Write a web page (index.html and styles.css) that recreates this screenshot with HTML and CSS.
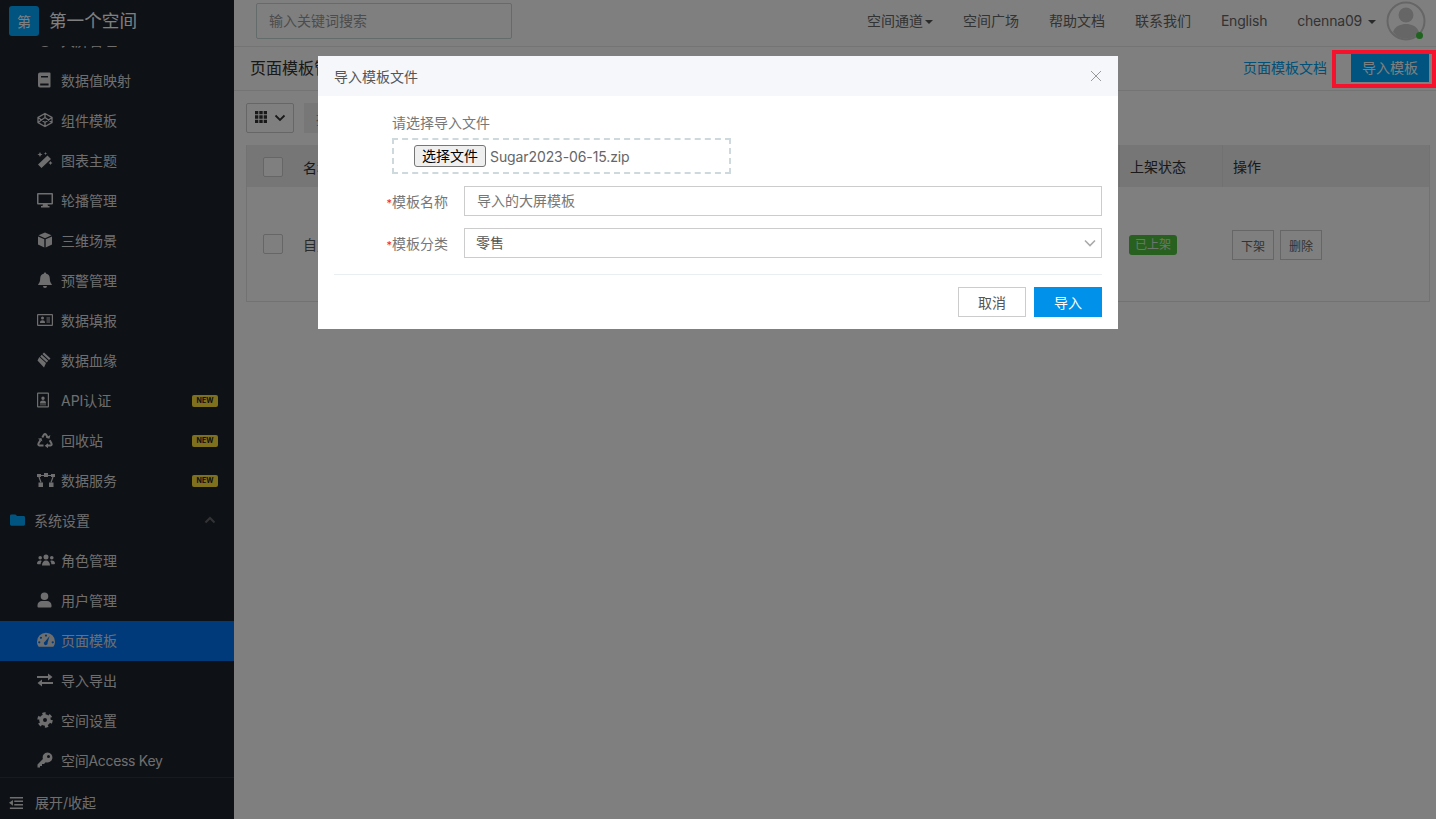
FILE: index.html
```html
<!DOCTYPE html>
<html lang="zh-CN">
<head>
<meta charset="utf-8">
<title>页面模板</title>
<link rel="stylesheet" href="styles.css">
</head>
<body>
<div class="app">
  <aside class="sidebar">
    <div class="brand"><span class="logo">第</span><span class="brand-name">第一个空间</span></div>
    <nav class="menu">
      <div class="clip-row"><a class="item"><svg class="ico" viewBox="0 0 16 16"><circle cx="8" cy="8" r="7"/></svg><span>大屏管理</span></a></div>
      <a class="item"><svg class="ico" viewBox="0 0 16 16"><path fill-rule="evenodd" d="M3 .5h9.500a1 1 0 011 1v13a1 1 0 01-1 1H3a2 2 0 01-2-2v-11a2 2 0 012-2zM4 4v1.400h7V4zM3.200 11.600v1.800h8.400v-1.800z"/></svg><span>数据值映射</span></a>
      <a class="item"><svg class="ico ico-line" viewBox="0 0 16 16"><path d="M8 1.500L15 5.500v5l-7 4-7-4v-5zM8 1.500v4M8 10.500v4M1 5.500l7 5 7-5M1 10.500l7-5 7 5"/></svg><span>组件模板</span></a>
      <a class="item"><svg class="ico" viewBox="0 0 16 16"><path d="M10.500 3.500l3.500 3.500L4.500 16 1 12.500zM3 0l.8 1.700 1.700.8-1.700.8L3 5l-.8-1.700L.5 2.500l1.700-.8zM8.500 0l.5 1 1 .5-1 .5-.5 1-.5-1-1-.5 1-.5zM13.500 9l.7 1.300 1.300.7-1.300.7-.7 1.300-.7-1.300-1.300-.7 1.300-.7z"/></svg><span>图表主题</span></a>
      <a class="item"><svg class="ico" viewBox="0 0 16 16"><path fill-rule="evenodd" d="M1 1h14a1 1 0 011 1v9.500a1 1 0 01-1 1h-4.500l.5 1.500h1.500v1.500H4V14h1.500l.5-1.500H1a1 1 0 01-1-1V2a1 1 0 011-1zM1.500 2.500V11h13V2.500z"/></svg><span>轮播管理</span></a>
      <a class="item"><svg class="ico" viewBox="0 0 16 16"><path d="M8 .5l6.500 2.800L8 6.200 1.500 3.300zM1 4.500l6.300 2.800v8.200L1 12.500zM15 4.500l-6.300 2.800v8.200l6.300-3z"/></svg><span>三维场景</span></a>
      <a class="item"><svg class="ico" viewBox="0 0 16 16"><path d="M8 .5a1.200 1.200 0 011.200 1.300C11.500 2.300 12.800 4 12.800 6.500c0 3 .8 4.500 2 5.700v.8H1.200v-.8c1.200-1.200 2-2.700 2-5.700C3.200 4 4.500 2.300 6.800 1.800A1.200 1.200 0 018 .5zM6 14h4a2 2 0 01-4 0z"/></svg><span>预警管理</span></a>
      <a class="item"><svg class="ico" viewBox="0 0 16 16"><path fill-rule="evenodd" d="M1 2h14a1 1 0 011 1v10a1 1 0 01-1 1H1a1 1 0 01-1-1V3a1 1 0 011-1zm.2 1.200v9.600h13.600V3.200zM5.500 4.500a1.500 1.500 0 110 3 1.500 1.500 0 010-3zM3 10.500c0-1.400 1-2.200 2.500-2.200S8 9.100 8 10.500v.5H3zM9.500 5.500H13v1H9.500zM9.500 7.500H13v1H9.500zM9.500 9.500H13v1H9.500z"/></svg><span>数据填报</span></a>
      <a class="item"><svg class="ico" viewBox="0 0 16 16"><path d="M7 .5l6.500 6-1.500 1.600-6.500-6zM4.700 2.800l6.500 6-1.500 1.600-6.500-6zM2.300 5l6.700 6L7 15.500 .5 8.500z"/></svg><span>数据血缘</span></a>
      <a class="item"><svg class="ico ico-narrow" viewBox="0 0 12 16"><path fill-rule="evenodd" d="M1 .5h10a1 1 0 011 1v13a1 1 0 01-1 1H1a1 1 0 01-1-1v-13a1 1 0 011-1zm.2 1.200v12.600h9.600V1.700zM6 4.500a1.700 1.700 0 110 3.400 1.700 1.700 0 010-3.400zM3 11c0-1.600 1.300-2.400 3-2.400s3 .8 3 2.400v.5H3zM3 12.500h6v.8H3z"/></svg><span>API认证</span><em class="new">NEW</em></a>
      <a class="item"><svg class="ico" viewBox="0 0 16 16"><path class="chunky" d="M5.300 5.500L7 2.600Q8 1.200 9 2.600L10.800 5.700M12.700 8.300L14.500 11.500Q15.200 13.300 13.500 13.600H9.800M6.500 13.600H2.500Q.8 13.300 1.500 11.500L3.400 8.300"/><path d="M8.800 5.800l3.600.9 1-3.600zM11 11.200v5l-3.300-2.500zM.9 6.800l3.500-.9 1 3.600z"/></svg><span>回收站</span><em class="new">NEW</em></a>
      <a class="item"><svg class="ico ico-wide" viewBox="0 0 18 16"><path d="M0 2h4v3H0zM7 1h4v4H7zM14 2h4v3h-4zM1.500 10.500h4.500v4.500H1.500zM12 10.500h4.500v4.500H12z"/><path class="thin" d="M2 5l2 5.500M16 5l-2 5.500M4 3.500h3M11 3.500h3"/></svg><span>数据服务</span><em class="new">NEW</em></a>
      <a class="item group"><svg class="ico folder" viewBox="0 0 16 14"><path d="M1.500 1h4.300l1.700 1.800h7a1.500 1.500 0 011.500 1.500v7.200A1.500 1.500 0 0114.500 13h-13A1.500 1.500 0 010 11.500v-9A1.500 1.500 0 011.500 1z"/></svg><span>系统设置</span><svg class="chev-up" viewBox="0 0 12 8"><path d="M1.500 6.500L6 2l4.500 4.500"/></svg></a>
      <a class="item"><svg class="ico ico-wide" viewBox="0 0 18 14"><path d="M9 1.500a2.500 2.500 0 110 5 2.500 2.500 0 010-5zM3.200 3a1.800 1.800 0 110 3.600 1.800 1.800 0 010-3.600zM14.800 3a1.800 1.800 0 110 3.600 1.800 1.800 0 010-3.600zM5 12.500C5 9.500 6.500 7.500 9 7.500s4 2 4 5zM0 10.500C0 8.500 1.500 7.500 3.200 7.500c.5 0 1 .1 1.500.4C4 9 3.600 10 3.600 11.200H1a1 1 0 01-1-.7zM18 10.500c0-2-1.500-3-3.200-3-.5 0-1 .1-1.500.4.700 1.100 1.100 2.100 1.100 3.300H17a1 1 0 001-.7z"/></svg><span>角色管理</span></a>
      <a class="item"><svg class="ico" viewBox="0 0 16 16"><path d="M7.500.5a3.800 3.800 0 110 7.600 3.800 3.800 0 010-7.600zM1.500 15.500a1 1 0 01-1-1v-1.200C.5 10.900 2.500 9 5 9h5c2.500 0 4.500 1.900 4.500 4.300v1.200a1 1 0 01-1 1z"/></svg><span>用户管理</span></a>
      <a class="item active"><svg class="ico ico-wide" viewBox="0 0 16 14"><path fill-rule="evenodd" d="M8 .5a8 8 0 018 8c0 1.700-.4 3-1.200 4a1 1 0 01-.8.500H2a1 1 0 01-.8-.5C.4 11.500 0 10.200 0 8.500a8 8 0 018-8zM8 2a1 1 0 100 2 1 1 0 000-2zM3.500 4a1 1 0 100 2 1 1 0 000-2zM2 8a1 1 0 100 2 1 1 0 000-2zM14 8a1 1 0 100 2 1 1 0 000-2zM11.200 3.500L7.200 8.300a1.700 1.700 0 102.200 1.200z"/></svg><span>页面模板</span></a>
      <a class="item"><svg class="ico" viewBox="0 0 16 16"><path d="M0 4h11V1.500L15.500 5 11 8.500V6H0zM16 10H5V7.500L.5 11 5 14.500V12h11z"/></svg><span>导入导出</span></a>
      <a class="item"><svg class="ico" viewBox="0 0 16 16"><circle class="cog-ring" cx="8" cy="8" r="3.900"/><circle class="cog-teeth" cx="8" cy="8" r="6.400"/></svg><span>空间设置</span></a>
      <a class="item"><svg class="ico" viewBox="0 0 16 16"><path fill-rule="evenodd" d="M10.500.500a5 5 0 11-1.800 9.700L7 12H5v2H3v1.500H.5V12.500L5.900 7A5 5 0 0110.500.500zm1 2.500a1.500 1.500 0 100 3 1.500 1.500 0 000-3z"/></svg><span class="tight-key">空间Access Key</span></a>
    </nav>
    <div class="collapse"><svg class="ico" viewBox="0 0 16 14"><path d="M1 0h15v1.800H1zM6 4h10v1.800H6zM6 8h10v1.800H6zM1 12h15v1.800H1zM4.500 3.500v6.500L0 6.800z"/></svg><span>展开/收起</span></div>
  </aside>
  <main class="main">
    <header class="topbar">
      <div class="search">输入关键词搜索</div>
      <nav class="topnav">
        <a>空间通道<i class="caret tight"></i></a>
        <a>空间广场</a>
        <a>帮助文档</a>
        <a>联系我们</a>
        <a class="latin">English</a>
        <a class="user latin">chenna09<i class="caret"></i></a>
      </nav>
      <div class="avatar">
        <svg viewBox="0 0 40 40" class="avatar-pic"><circle cx="20" cy="20" r="18.500" class="avatar-ring"/><circle cx="20" cy="14" r="7.500" class="avatar-fill"/><path class="avatar-fill" d="M7 31c2-6 8-8 13-8s11 2 13 8a16 16 0 01-26 0z"/></svg>
        <i class="online"></i>
      </div>
    </header>
    <div class="subhead">
      <h1>页面模板管理</h1>
      <a class="doc-link">页面模板文档</a>
      <button class="primary import-top">导入模板</button>
    </div>
    <div class="toolbar">
      <button class="grid-btn"><svg class="grid-ico" viewBox="0 0 12 12"><path d="M0 0h3.300v3.300H0zM4.300 0h3.400v3.300H4.300zM8.700 0H12v3.300H8.700zM0 4.300h3.300v3.400H0zM4.300 4.300h3.400v3.400H4.300zM8.700 4.300H12v3.400H8.700zM0 8.700h3.300V12H0zM4.300 8.700h3.400V12H4.300zM8.700 8.700H12V12H8.700z"/></svg><svg class="grid-chev" viewBox="0 0 12 8"><path d="M1.500 1.500L6 6l4.500-4.500"/></svg></button>
      <button class="bulk">批量操作</button>
    </div>
    <section class="table">
      <div class="thead">
        <span class="cell-check"><i class="check"></i></span>
        <span class="cell-name">名称</span>
        <span class="cell-status">上架状态</span>
        <span class="cell-op">操作</span>
      </div>
      <div class="trow">
        <span class="cell-check"><i class="check"></i></span>
        <span class="cell-name">自定义模板</span>
        <span class="cell-status"><b class="tag">已上架</b></span>
        <span class="cell-op ops"><button class="mini">下架</button><button class="mini">删除</button></span>
      </div>
    </section>
  </main>
</div>
<div class="overlay">
  <div class="modal">
    <div class="modal-head"><span>导入模板文件</span><svg class="close" viewBox="0 0 12 12"><path d="M1 1l10 10M11 1L1 11"/></svg></div>
    <div class="modal-body">
      <div class="file-label">请选择导入文件</div>
      <div class="file-box"><button class="file-btn">选择文件</button><span class="file-name">Sugar2023-06-15.zip</span></div>
      <div class="field"><label><em>*</em>模板名称</label><div class="input muted">导入的大屏模板</div></div>
      <div class="field"><label><em>*</em>模板分类</label><div class="input select"><span>零售</span><svg class="sel-chev" viewBox="0 0 12 8"><path d="M1 1.500L6 6.500l5-5"/></svg></div></div>
    </div>
    <div class="modal-foot"><button class="ghost">取消</button><button class="confirm">导入</button></div>
  </div>
</div>
<div class="highlight"></div>
</body>
</html>
```
FILE: styles.css
```css
* { box-sizing: border-box; }
html, body { margin: 0; height: 100%; overflow: hidden; }
body { font-family: Inter, "Noto Sans CJK SC", sans-serif; font-size: 14px; color: #333; background: #fff; }
button { font-family: inherit; }
a { color: inherit; text-decoration: none; }
.app { display: flex; height: 819px; }

.sidebar { width: 234px; flex: none; background: #1c222c; color: #eee; display: flex; flex-direction: column; height: 819px; overflow: hidden; }
.brand { height: 46px; flex: none; display: flex; align-items: flex-start; padding: 6px 0 0 9px; }
.logo { width: 30px; height: 30px; border-radius: 3px; background: #00a8ff; color: #fff; display: flex; align-items: center; justify-content: center; font-size: 14px; }
.brand-name { margin-left: 10px; font-size: 17.6px; line-height: 30px; color: #fff; }
.menu { flex: 1; min-height: 0; overflow: hidden; }
.clip-row { height: 15px; overflow: hidden; }
.clip-row .item { margin-top: -25px; }
.item { display: flex; align-items: center; height: 40px; padding: 0 0 2px 37px; position: relative; color: #ddd; }
.ico { width: 16px; height: 16px; fill: currentColor; flex: none; margin-right: 8px; }
.ico-narrow { width: 12px; margin-right: 12px; }
.ico-wide { width: 18px; margin-right: 6px; }
.ico-line { fill: none; stroke: currentColor; stroke-width: 1.300; }
.thin { fill: none; stroke: currentColor; stroke-width: 1.200; }
.chunky { fill: none; stroke: currentColor; stroke-width: 2; }
.cog-ring { fill: none; stroke: currentColor; stroke-width: 3.800; }
.cog-teeth { fill: none; stroke: currentColor; stroke-width: 2.600; stroke-dasharray: 3.200 3.500; }
.new { margin-left: auto; margin-right: 16px; margin-top: 2px; width: 26px; height: 12px; background: #ffe13c; border-radius: 2px; color: #222; font-style: normal; font-weight: 700; font-size: 7px; line-height: 12px; text-align: center; }
.group { padding-left: 10px; }
.group .ico { margin-right: 9px; width: 15px; }
.folder { color: #00a8ff; }
.chev-up { width: 12px; height: 8px; margin-left: auto; margin-right: 18px; fill: none; stroke: #666; stroke-width: 2; }
.item.active { background: #0075f4; }
.tight-key { letter-spacing: -.3px; }
.collapse { height: 42px; flex: none; border-top: 1px solid #2f353e; display: flex; align-items: flex-start; padding: 14px 0 0 9px; color: #ddd; }
.collapse .ico { height: 14px; width: 14px; margin: 4px 12px 0 0; }

.main { flex: 1; min-width: 0; display: flex; flex-direction: column; }
.topbar { height: 47px; flex: none; border-bottom: 1px solid #e9e9e9; display: flex; align-items: flex-start; padding-left: 22px; }
.search { width: 256px; height: 36px; margin-top: 3px; border: 1px solid #c9d6d6; border-radius: 2px; padding-left: 12px; line-height: 34px; color: #999; }
.topnav { margin-left: auto; display: flex; gap: 30px; line-height: 42px; color: #666; }
.latin { letter-spacing: -.2px; }
.caret { display: inline-block; width: 0; height: 0; margin-left: 6px; border: 4px solid transparent; border-top-color: #555; border-bottom: 0; vertical-align: 2px; }
.caret.tight { margin-left: 2px; }
.avatar { width: 40px; height: 40px; margin: 1px 10px 0 10px; position: relative; }
.avatar-pic { width: 40px; height: 40px; display: block; }
.avatar-ring { fill: none; stroke: #ccc; stroke-width: 2; }
.avatar-fill { fill: #ccc; }
.online { position: absolute; right: 3px; bottom: 2px; width: 7px; height: 7px; border-radius: 50%; background: #3fc63f; }
.subhead { height: 44px; flex: none; border-bottom: 1px solid #e9e9e9; display: flex; align-items: center; padding: 0 7px 3px 16px; }
.subhead h1 { margin: 0; font-size: 16px; font-weight: 400; color: #333; }
.doc-link { margin-left: auto; color: #00a0f0; }
.primary { margin-left: 24px; border: 0; background: #00a8ff; color: #fff; width: 78px; height: 30px; font-size: 14px; padding: 0; }
.toolbar { display: flex; gap: 10px; padding: 12px 0 0 12px; height: 54px; flex: none; }
.grid-btn { width: 48px; height: 30px; border: 1px solid #ccc; background: #fff; padding: 0 0 0 8px; display: flex; align-items: center; border-radius: 2px; }
.grid-ico { width: 12px; height: 12px; fill: #333; margin-bottom: 3px; }
.grid-chev { width: 12px; height: 8px; margin-left: 7px; fill: none; stroke: #333; stroke-width: 1.800; }
.bulk { width: 80px; height: 30px; border: 0; background: #eee; color: #999; font-size: 14px; }
.table { margin: 0 6px 0 12px; height: 157px; border: 1px solid #e4e4e4; border-top: 0; }
.thead { height: 42px; background: #ececec; display: flex; align-items: center; color: #333; }
.thead .cell-check, .thead .cell-name { padding-top: 2px; }
.trow { height: 114px; display: flex; align-items: center; color: #555; }
.cell-check { width: 56px; padding-left: 16px; flex: none; display: flex; }
.check { width: 20px; height: 20px; border: 1px solid #ccc; border-radius: 2px; background: #fff; }
.cell-name { flex: 1; }
.cell-status { width: 103px; flex: none; }
.cell-op { width: 207px; flex: none; padding-left: 10px; }
.thead .cell-op { border-left: 1px solid #e2e2e2; height: 42px; line-height: 44px; }
.thead .cell-status { border-left: 1px solid #e2e2e2; height: 42px; line-height: 44px; padding-left: 10px; }
.trow .cell-status { padding: 2px 0 0 10px; }
.tag { display: inline-block; width: 48px; height: 20px; line-height: 20px; text-align: center; border-radius: 3px; background: #4fc03f; color: #d8ecd8; font-size: 12px; font-weight: 400; }
.ops { display: flex; gap: 6px; padding-top: 2px; }
.mini { width: 42px; height: 30px; border: 1px solid #ccc; background: #fff; color: #666; font-size: 12px; padding: 0; }

.overlay { position: fixed; inset: 0; background: rgba(0,0,0,.5); display: flex; justify-content: center; align-items: flex-start; padding-top: 56px; }
.modal { width: 800px; height: 273px; background: #fff; display: flex; flex-direction: column; }
.modal-head { height: 40px; flex: none; background: #f5f7fb; display: flex; align-items: center; justify-content: space-between; padding: 0 16px; color: #555; }
.close { width: 12px; height: 12px; fill: none; stroke: #999; stroke-width: 1; }
.modal-body { margin: 0 16px; padding: 18px 0 0 58px; height: 179px; border-bottom: 1px solid #e8eef2; flex: none; }
.file-label { line-height: 18px; color: #777; }
.file-box { width: 339px; height: 36px; margin-top: 6px; border: 2px dashed #cdd9dd; display: flex; align-items: center; padding-left: 20px; }
.file-btn { width: 72px; height: 22px; padding: 0; border: 1px solid #767676; border-radius: 3px; background: #efefef; color: #000; font-size: 14px; line-height: 20px; }
.file-name { margin-left: 4px; color: #666; letter-spacing: -.1px; }
.field { display: flex; align-items: center; margin-top: 12px; margin-left: -58px; height: 30px; }
.field label { width: 114px; text-align: right; color: #777; flex: none; }
.field label em { color: #f5222d; font-style: normal; font-size: 11px; }
.input { margin-left: 16px; flex: 1; height: 30px; border: 1px solid #ccc; padding-left: 12px; line-height: 28px; color: #555; }
.muted { color: #777; }
.select { display: flex; align-items: center; justify-content: space-between; padding: 0 5px 0 11px; }
.sel-chev { width: 12px; height: 8px; fill: none; stroke: #aaa; stroke-width: 1.600; }
.modal-foot { display: flex; justify-content: flex-end; gap: 8px; padding: 12px 16px 0 0; }
.ghost { width: 68px; height: 30px; border: 1px solid #ccc; background: #fff; color: #555; font-size: 14px; padding: 0; }
.confirm { width: 68px; height: 30px; border: 0; background: #0091ea; color: #fff; font-size: 14px; padding: 0; }
.highlight { position: fixed; left: 1332px; top: 50px; width: 104px; height: 38px; border: 4px solid #f5122c; }
```
